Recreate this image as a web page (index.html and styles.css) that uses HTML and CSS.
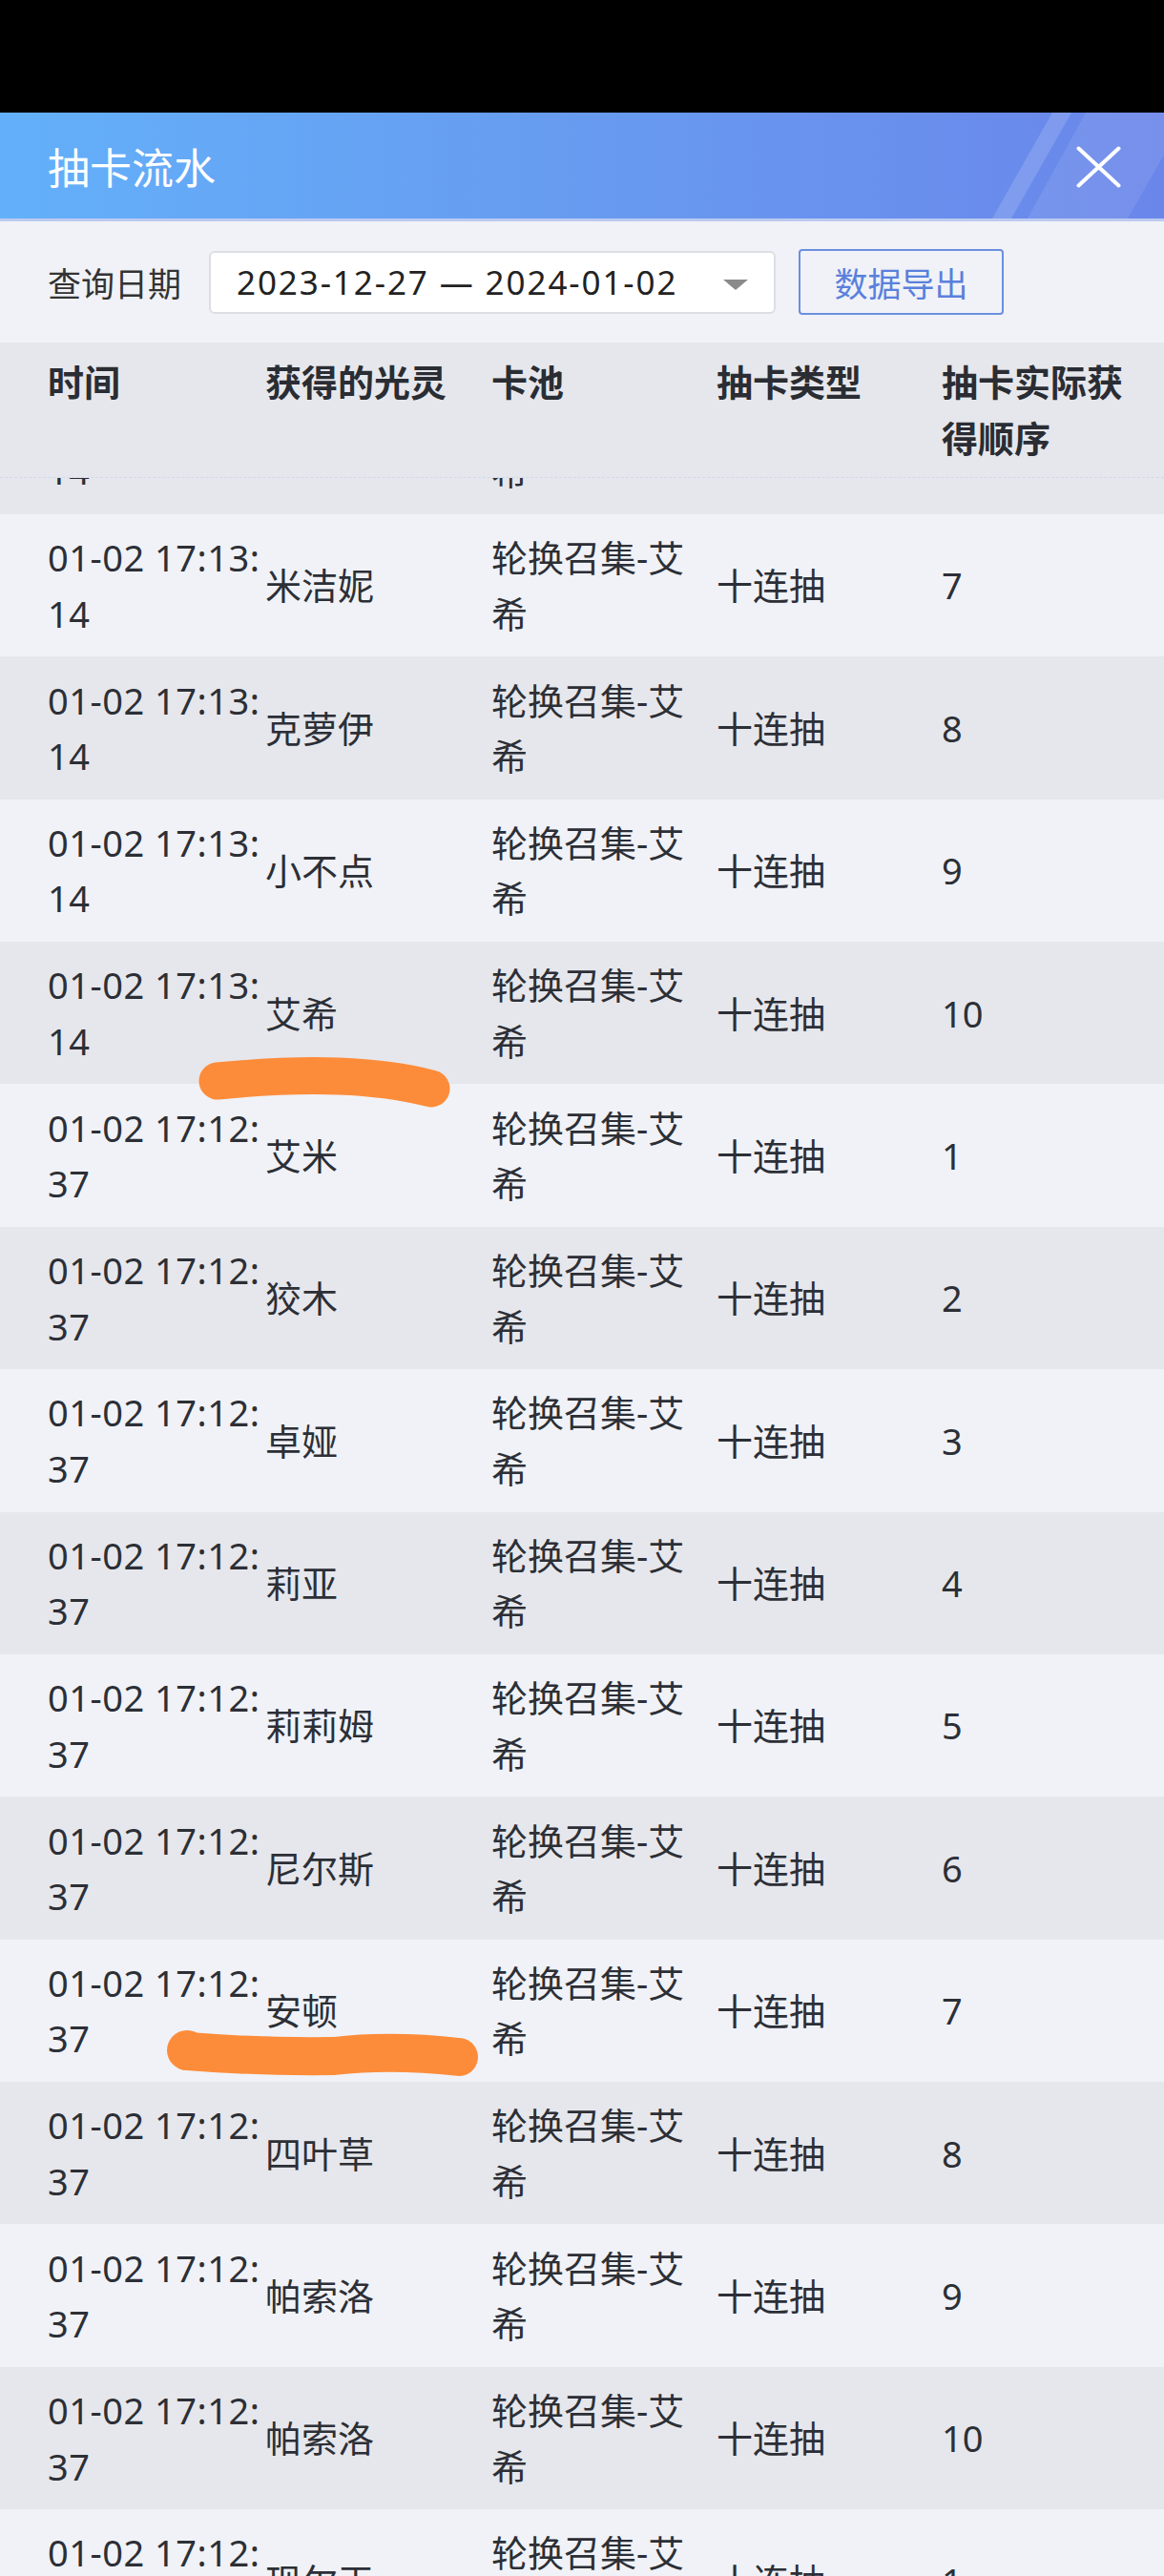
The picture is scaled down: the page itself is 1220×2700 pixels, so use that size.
FILE: index.html
```html
<!DOCTYPE html>
<html lang="zh-CN">
<head>
    <meta charset="UTF-8">
    <meta name="viewport" content="width=device-width, initial-scale=1.0">
    <title>抽卡流水</title>
    <link rel="stylesheet" href="styles.css">
</head>
<body>

    <div class="status-bar"></div>

    <!-- Title bar -->
    <div class="title-bar">
        <h1>抽卡流水</h1>
        <svg class="title-deco" width="200" height="111" viewBox="0 0 200 111">
            <polygon points="83,0 103,0 40,111 20,111" fill="#fff" fill-opacity="0.15"/>
            <polygon points="118,0 200,0 200,44 162,111 57,111" fill="#fff" fill-opacity="0.09"/>
        </svg>
        <button class="close-btn" aria-label="关闭">
            <svg width="47" height="44" viewBox="0 0 47 44">
                <path d="M2.5 2.5L44.5 41.5M44.5 2.5L2.5 41.5" stroke="#fff" stroke-width="4" stroke-linecap="round"/>
            </svg>
        </button>
    </div>

    <!-- Query -->
    <div class="query-bar">
        <span class="query-label">查询日期</span>
        <div class="date-range">
            <span>2023-12-27 — 2024-01-02</span>
            <i class="caret"></i>
        </div>
        <button class="export-btn">数据导出</button>
    </div>

    <!-- Records -->
    <div class="table">
        <div class="table-head">
            <div>时间</div>
            <div>获得的光灵</div>
            <div>卡池</div>
            <div>抽卡类型</div>
            <div>抽卡实际获得顺序</div>
        </div>
        <!-- list is scrolled, first row mostly out of view -->
        <div class="table-body" id="tableBody"></div>
    </div>

    <!-- hand drawn marks over the screenshot -->
    <svg class="marks" width="1220" height="2700" viewBox="0 0 1220 2700">
        <path d="M228 1133 Q300 1126 355 1128 T452 1141" fill="none" stroke="#fd8c3a" stroke-width="39" stroke-linecap="round"/>
        <path d="M197 2150 Q270 2156 350 2155 Q410 2148 481 2156" fill="none" stroke="#fd8c3a" stroke-width="40" stroke-linecap="round"/>
        <circle cx="196" cy="2149" r="21" fill="#fd8c3a"/>
    </svg>

    <script>
        const pool = '轮换召集-艾希';
        const rows = [
            ['01-02 17:13:14', '薇丝', 6],
            ['01-02 17:13:14', '米洁妮', 7],
            ['01-02 17:13:14', '克萝伊', 8],
            ['01-02 17:13:14', '小不点', 9],
            ['01-02 17:13:14', '艾希', 10],
            ['01-02 17:12:37', '艾米', 1],
            ['01-02 17:12:37', '狡木', 2],
            ['01-02 17:12:37', '卓娅', 3],
            ['01-02 17:12:37', '莉亚', 4],
            ['01-02 17:12:37', '莉莉姆', 5],
            ['01-02 17:12:37', '尼尔斯', 6],
            ['01-02 17:12:37', '安顿', 7],
            ['01-02 17:12:37', '四叶草', 8],
            ['01-02 17:12:37', '帕索洛', 9],
            ['01-02 17:12:37', '帕索洛', 10],
            ['01-02 17:12:37', '现尔玉', 1]
        ];

        const tableBody = document.getElementById('tableBody');
        rows.forEach(([time, name, order]) => {
            const row = document.createElement('div');
            row.className = 'row';
            row.innerHTML = `
                <div class="cell-time">${time}</div>
                <div>${name}</div>
                <div>${pool}</div>
                <div>十连抽</div>
                <div>${order}</div>
            `;
            tableBody.appendChild(row);
        });
    </script>

</body>
</html>
```

FILE: styles.css
```css
body {
    margin: 0;
    width: 1220px;
    font-family: "Noto Sans", "Noto Sans CJK SC", sans-serif;
    background-color: #f0f2f7;
    color: #2c2f36;
}
.status-bar {
    height: 118px;
    background-color: #000;
}

/* Title bar */
.title-bar {
    position: relative;
    display: flex;
    align-items: center;
    height: 111px;
    padding-left: 50px;
    background: linear-gradient(90deg, #63b0fa 0%, #679df1 45%, #6a86ea 100%);
    border-bottom: 3px solid #bccaf0;
    overflow: hidden;
}
.title-bar h1 {
    margin: 0;
    font-size: 44px;
    font-weight: normal;
    color: #fff;
}
.title-deco {
    position: absolute;
    top: 0;
    right: 0;
}
.close-btn {
    position: relative;
    margin-left: auto;
    margin-right: 45px;
    margin-top: 3px;
    padding: 0;
    border: none;
    background: none;
    display: flex;
}

/* Query bar */
.query-bar {
    display: flex;
    align-items: center;
    height: 127px;
    padding-left: 50px;
    background-color: #f0f2f7;
}
.query-label {
    font-size: 35px;
    color: #333;
    margin-right: 29px;
}
.date-range {
    box-sizing: border-box;
    width: 594px;
    height: 66px;
    display: flex;
    align-items: center;
    justify-content: space-between;
    padding: 0 27px 0 27px;
    background-color: #fff;
    border: 2px solid #dcdee4;
    border-radius: 6px;
    font-size: 35px;
    letter-spacing: 1.9px;
    color: #222;
}
.caret {
    width: 0;
    height: 0;
    margin-top: 6px;
    border-left: 13px solid transparent;
    border-right: 13px solid transparent;
    border-top: 11px solid #8a8a8a;
}
.export-btn {
    box-sizing: border-box;
    margin-left: 24px;
    width: 215px;
    height: 69px;
    padding: 0;
    font-family: inherit;
    font-size: 35px;
    color: #5a80dc;
    background: none;
    border: 2px solid #6b8fe0;
    border-radius: 4px;
}

/* Table */
.table-head,
.row {
    display: grid;
    grid-template-columns: 228px 237px 236px 236px 1fr;
    padding: 0 20px 0 50px;
    font-size: 38px;
    line-height: 58.5px;
}
.table-head {
    align-items: start;
    padding-top: 12px;
    padding-bottom: 12px;
    font-weight: bold;
    color: #2a2d33;
    background-color: #e6e7ec;
    border-bottom: 1px dashed #cfd9ec;
}
.table-head div,
.row div {
    padding-right: 12px;
}
.table-head div:first-child,
.row .cell-time {
    padding-right: 0;
}
.table-body {
    overflow: hidden;
}
.row {
    align-items: center;
    padding-top: 16.2px;
    padding-bottom: 16.2px;
}
.row:first-child {
    margin-top: -111.4px;
}
.row:nth-child(odd) {
    background-color: #e6e7ec;
}
.row:nth-child(even) {
    background-color: #f0f2f7;
}
.cell-time {
    word-break: break-all;
    letter-spacing: 0.5px;
}

/* Annotation strokes */
.marks {
    position: absolute;
    top: 0;
    left: 0;
    z-index: 2;
    pointer-events: none;
}
```
